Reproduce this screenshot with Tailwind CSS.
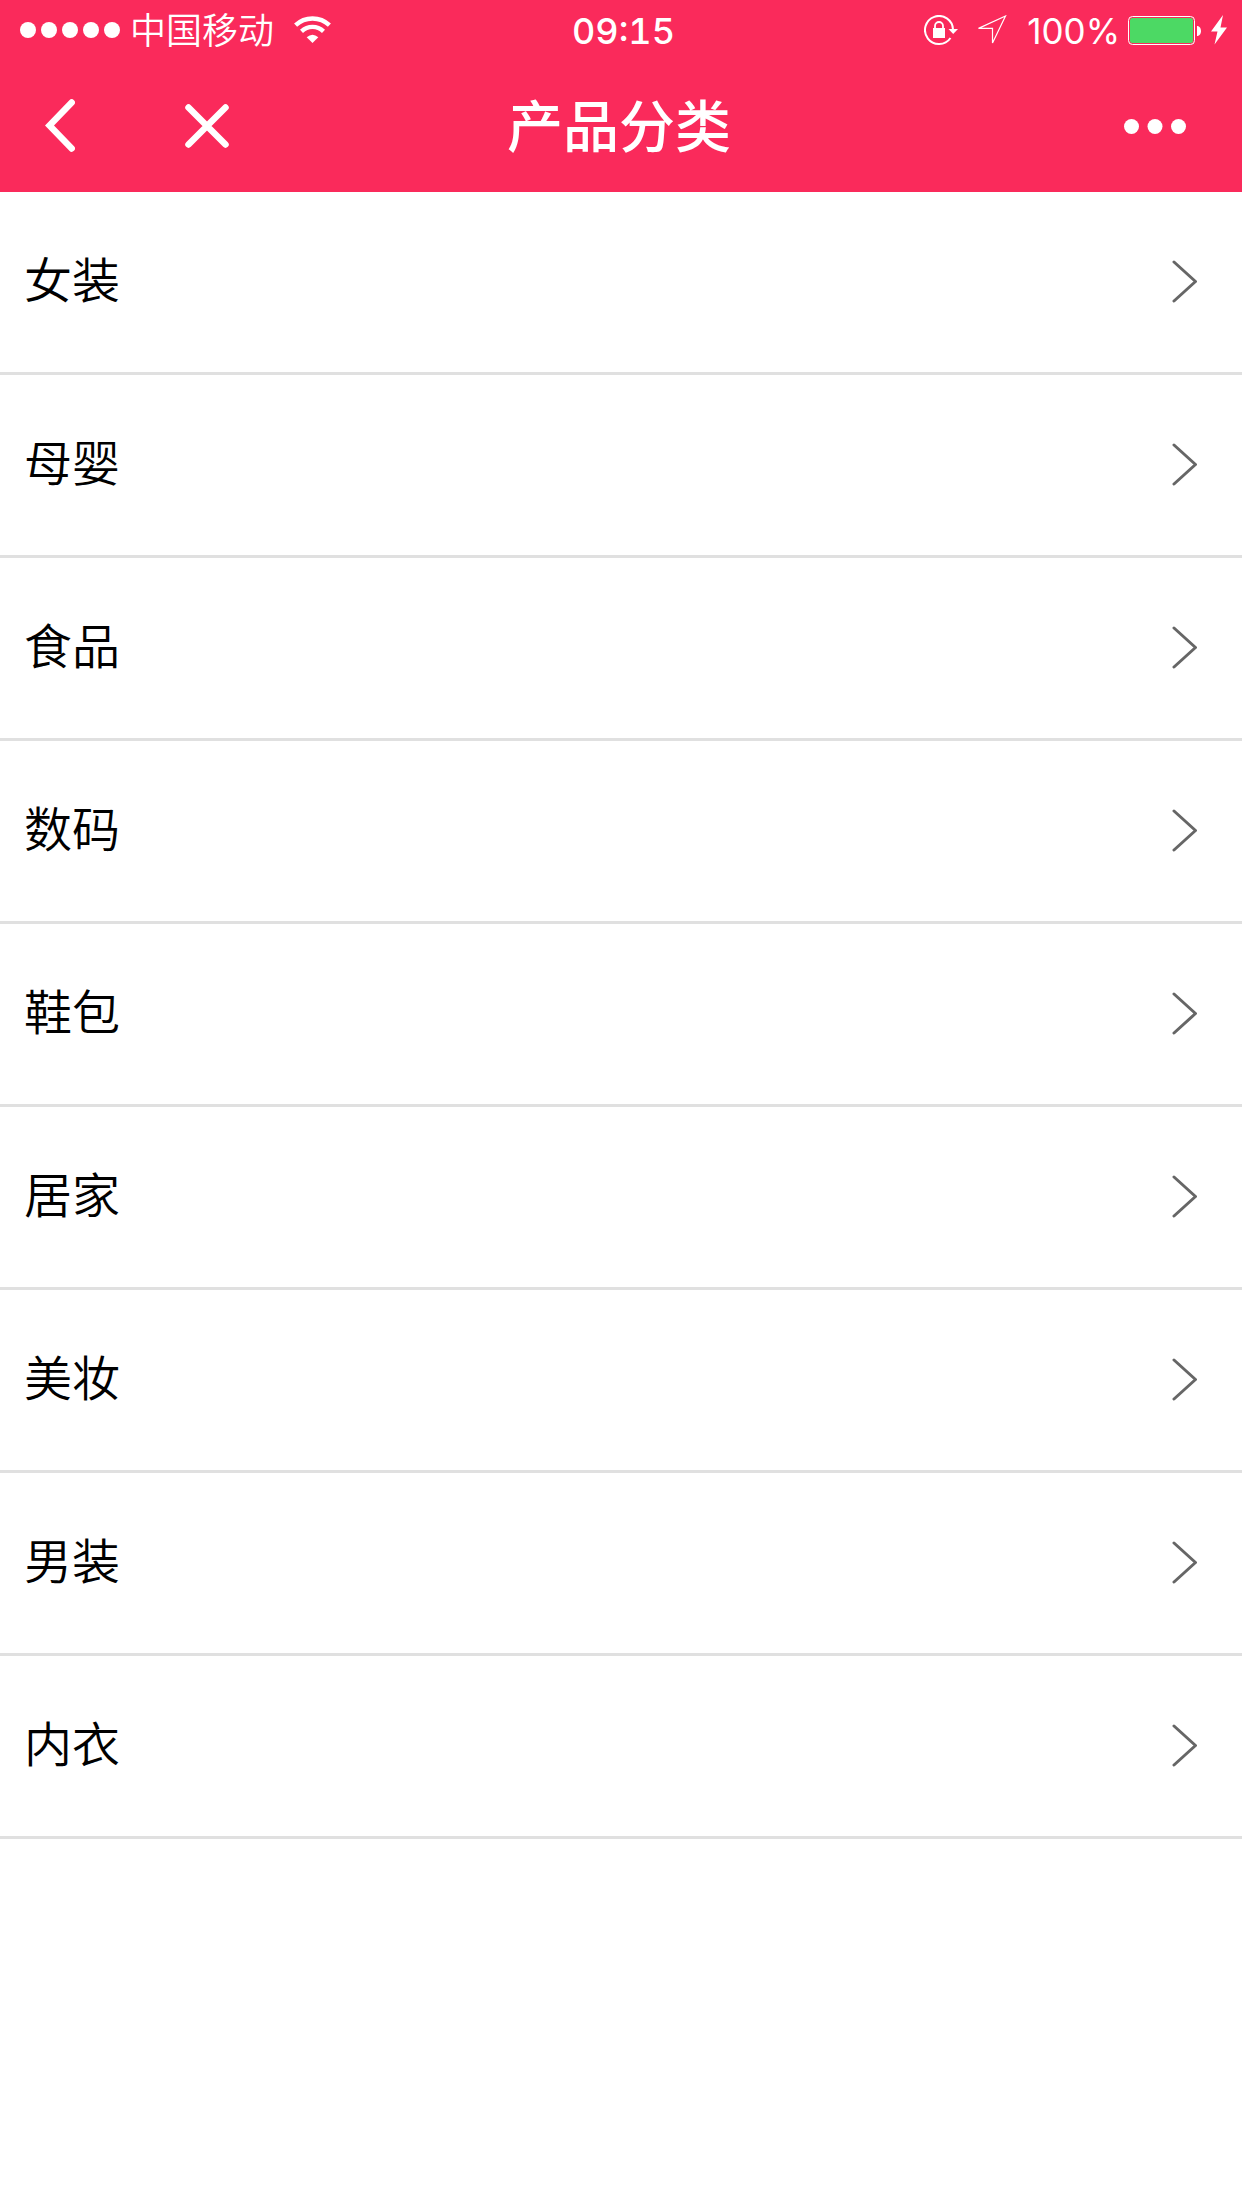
<!DOCTYPE html>
<html lang="zh-CN">
<head>
<meta charset="utf-8">
<meta name="viewport" content="width=device-width, initial-scale=1">
<title>产品分类</title>
<script src="https://cdn.jsdelivr.net/npm/@tailwindcss/browser@4"></script>
</head>
<body class="min-h-screen bg-white font-['Inter','Noto_Sans_CJK_SC',sans-serif] text-black">
<header class="bg-[#fa2a5b] text-white">
  <!-- Status bar -->
  <div class="grid h-15 grid-cols-[1fr_auto_1fr] items-center pr-[15px] pl-5 text-4xl leading-10">
    <div class="flex items-center">
      <svg class="h-4 w-25" viewBox="0 0 100 16" fill="currentColor" aria-hidden="true"><circle cx="8" cy="8" r="8"/><circle cx="29" cy="8" r="8"/><circle cx="50" cy="8" r="8"/><circle cx="71" cy="8" r="8"/><circle cx="92" cy="8" r="8"/></svg>
      <span class="ml-[10px] pt-0.5 font-[350]">中国移动</span>
      <svg class="ml-5 h-7 w-[37px]" viewBox="0 0 37 28" fill="none" stroke="currentColor" stroke-width="4.4" aria-hidden="true"><path d="M1.6 9.2C11 0.200 26 0.200 35.400 9.200"/><path d="M7.500 15.300C13.800 9.400 23.200 9.400 29.500 15.300"/><path d="M12.700 21.300Q18.500 16 24.300 21.300L18.500 27Z" fill="currentColor" stroke="none"/></svg>
    </div>
    <time class="pt-0.5 font-medium tabular-nums">09:15</time>
    <div class="flex items-center justify-end">
      <svg class="h-[30px] w-[34px]" viewBox="0 0 34 30" fill="none" stroke="currentColor" aria-hidden="true"><path d="M29 14.500A14 14 0 1 0 26.500 23" stroke-width="2"/><path d="M24.500 14H34L29.200 19Z" fill="currentColor" stroke="none"/><rect x="9" y="13" width="12" height="10" fill="currentColor" stroke="none"/><path d="M11 14V11a4 4 0 0 1 8 0V14" stroke-width="1.800"/></svg>
      <svg class="ml-[19px] h-[30px] w-[30px]" viewBox="0 0 30 30" fill="none" stroke="currentColor" stroke-width="1.200" aria-hidden="true"><path d="M28.500 1L1.500 13.400H15.500V28Z"/></svg>
      <span class="ml-5 pt-0.5 text-[35px]">100%</span>
      <svg class="ml-2 h-[30px] w-[74px]" viewBox="0 0 74 30" fill="none" aria-hidden="true"><rect x=".5" y="1.500" width="66" height="28" rx="4" stroke="currentColor"/><rect x="2" y="3" width="63" height="25" rx="2.500" fill="#4cd964"/><path d="M69 11c5.300 0 5.300 10 0 10Z" fill="currentColor"/></svg>
      <svg class="ml-[9px] h-[30px] w-4" viewBox="0 0 16 30" fill="currentColor" aria-hidden="true"><path d="M12 0L0 16.500H6.500L3.500 29.500L16 12.500H9.500Z"/></svg>
    </div>
  </div>
  <!-- Navigation bar -->
  <nav class="grid h-33 grid-cols-[1fr_auto_1fr] items-center pr-10 pl-9" aria-label="导航">
    <div class="flex items-center gap-[92px]">
      <button type="button" aria-label="返回" class="p-[9px]"><svg class="h-[54px] w-[30px]" viewBox="0 0 30 54" fill="none" stroke="currentColor" stroke-width="6.500" stroke-linecap="round"><path d="M26.700 3.500L4.500 26.500L26.700 49.500"/></svg></button>
      <button type="button" aria-label="关闭" class="p-[9px]"><svg class="h-11 w-11" viewBox="0 0 44 44" fill="none" stroke="currentColor" stroke-width="6.500" stroke-linecap="round"><path d="M3.500 3.500L40.500 40.500M40.500 3.500L3.500 40.500"/></svg></button>
    </div>
    <h1 class="pt-0.5 text-[56px] leading-16 font-medium">产品分类</h1>
    <button type="button" aria-label="更多" class="justify-self-end p-4"><svg class="h-4 w-[62px]" viewBox="0 0 62 16" fill="currentColor"><circle cx="7.500" cy="8.500" r="7.500"/><circle cx="31" cy="8.500" r="7.500"/><circle cx="54.500" cy="8.500" r="7.500"/></svg></button>
  </nav>
</header>
<main>
  <ul id="categories" class="text-5xl font-[350]">
    <li class="border-b-3 border-[#e0e0e0]"><a href="#women" class="flex h-45 items-center justify-between pr-11 pb-0.5 pl-6">女装<svg class="h-11 w-[26px]" viewBox="0 0 26 44" fill="none" stroke="#666" stroke-width="3" stroke-linecap="round" stroke-linejoin="round" aria-hidden="true"><path d="M2 3L23.500 22.500L2 42"/></svg></a></li>
    <li class="border-b-3 border-[#e0e0e0]"><a href="#baby" class="flex h-45 items-center justify-between pr-11 pb-0.5 pl-6">母婴<svg class="h-11 w-[26px]" viewBox="0 0 26 44" fill="none" stroke="#666" stroke-width="3" stroke-linecap="round" stroke-linejoin="round" aria-hidden="true"><path d="M2 3L23.500 22.500L2 42"/></svg></a></li>
    <li class="border-b-3 border-[#e0e0e0]"><a href="#food" class="flex h-45 items-center justify-between pr-11 pb-0.5 pl-6">食品<svg class="h-11 w-[26px]" viewBox="0 0 26 44" fill="none" stroke="#666" stroke-width="3" stroke-linecap="round" stroke-linejoin="round" aria-hidden="true"><path d="M2 3L23.500 22.500L2 42"/></svg></a></li>
    <li class="border-b-3 border-[#e0e0e0]"><a href="#digital" class="flex h-45 items-center justify-between pr-11 pb-0.5 pl-6">数码<svg class="h-11 w-[26px]" viewBox="0 0 26 44" fill="none" stroke="#666" stroke-width="3" stroke-linecap="round" stroke-linejoin="round" aria-hidden="true"><path d="M2 3L23.500 22.500L2 42"/></svg></a></li>
    <li class="border-b-3 border-[#e0e0e0]"><a href="#shoes" class="flex h-45 items-center justify-between pr-11 pb-0.5 pl-6">鞋包<svg class="h-11 w-[26px]" viewBox="0 0 26 44" fill="none" stroke="#666" stroke-width="3" stroke-linecap="round" stroke-linejoin="round" aria-hidden="true"><path d="M2 3L23.500 22.500L2 42"/></svg></a></li>
    <li class="border-b-3 border-[#e0e0e0]"><a href="#home" class="flex h-45 items-center justify-between pr-11 pb-0.5 pl-6">居家<svg class="h-11 w-[26px]" viewBox="0 0 26 44" fill="none" stroke="#666" stroke-width="3" stroke-linecap="round" stroke-linejoin="round" aria-hidden="true"><path d="M2 3L23.500 22.500L2 42"/></svg></a></li>
    <li class="border-b-3 border-[#e0e0e0]"><a href="#beauty" class="flex h-45 items-center justify-between pr-11 pb-0.5 pl-6">美妆<svg class="h-11 w-[26px]" viewBox="0 0 26 44" fill="none" stroke="#666" stroke-width="3" stroke-linecap="round" stroke-linejoin="round" aria-hidden="true"><path d="M2 3L23.500 22.500L2 42"/></svg></a></li>
    <li class="border-b-3 border-[#e0e0e0]"><a href="#men" class="flex h-45 items-center justify-between pr-11 pb-0.5 pl-6">男装<svg class="h-11 w-[26px]" viewBox="0 0 26 44" fill="none" stroke="#666" stroke-width="3" stroke-linecap="round" stroke-linejoin="round" aria-hidden="true"><path d="M2 3L23.500 22.500L2 42"/></svg></a></li>
    <li class="border-b-3 border-[#e0e0e0]"><a href="#underwear" class="flex h-45 items-center justify-between pr-11 pb-0.5 pl-6">内衣<svg class="h-11 w-[26px]" viewBox="0 0 26 44" fill="none" stroke="#666" stroke-width="3" stroke-linecap="round" stroke-linejoin="round" aria-hidden="true"><path d="M2 3L23.500 22.500L2 42"/></svg></a></li>
  </ul>
</main>
</body>
</html>
